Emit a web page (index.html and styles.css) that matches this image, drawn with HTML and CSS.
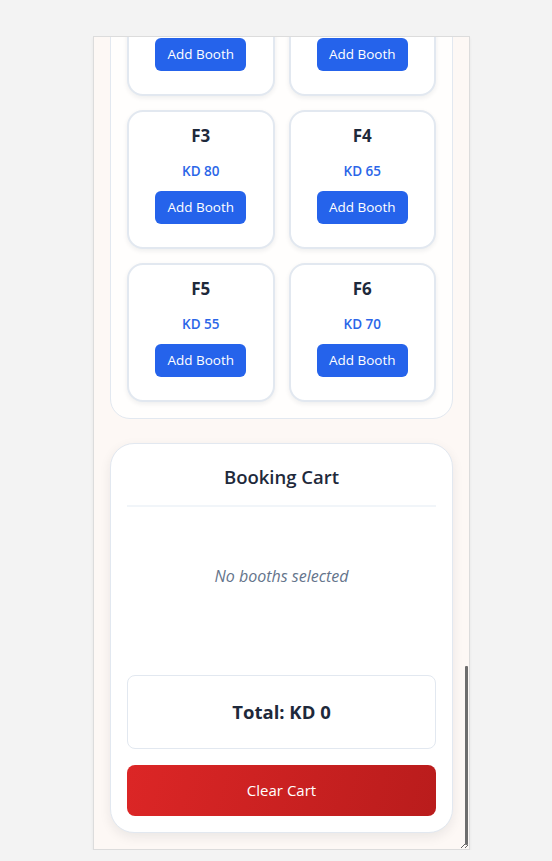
FILE: index.html
```html
<!DOCTYPE html>
<html lang="en">
<head>
  <meta charset="UTF-8">
  <meta name="viewport" content="width=device-width, initial-scale=1">
  <title>Booth Booking</title>
  <link rel="stylesheet" href="styles.css">
</head>
<body>

  <div class="frame-wrap">
    <div class="frame" id="frame">

      <!-- Header -->
      <header class="page-head">
        <h1>Exhibition Booth Booking</h1>
        <p>Pick your booths from the floor plan and add them to the cart.</p>
      </header>

      <!-- Booth list -->
      <section class="booths">
        <h2>Available Booths</h2>
        <div class="booth-grid" id="boothGrid"></div>
      </section>

      <!-- Cart -->
      <section class="cart">
        <h2 class="cart-title">Booking Cart</h2>
        <div class="cart-items" id="cartItems">
          <p class="empty">No booths selected</p>
        </div>
        <div class="cart-total">Total: KD <span id="total">0</span></div>
        <button class="clear-btn" onclick="clearCart()">Clear Cart</button>
      </section>

    </div>
    <div class="scroll-thumb" id="thumb"></div>
  </div>

  <script>
    const booths = [
      ["A1", 60], ["A2", 75], ["A3", 50], ["A4", 90], ["A5", 45], ["A6", 85],
      ["B1", 70], ["B2", 55], ["B3", 65], ["B4", 80], ["B5", 60], ["B6", 95],
      ["C1", 50], ["C2", 70], ["C3", 85], ["C4", 40], ["C5", 75], ["C6", 60],
      ["D1", 90], ["D2", 65], ["D3", 55], ["D4", 70], ["D5", 80], ["D6", 45],
      ["E1", 60], ["E2", 85], ["E3", 75], ["E4", 50], ["E5", 65], ["E6", 90],
      ["F1", 75], ["F2", 60], ["F3", 80], ["F4", 65], ["F5", 55], ["F6", 70]
    ];

    let cart = [];

    const grid = document.getElementById("boothGrid");
    booths.forEach(([name, price]) => {
      grid.innerHTML += `<div class="booth-card">
        <h3>${name}</h3>
        <p class="price">KD ${price}</p>
        <button class="add-btn" onclick="addBooth('${name}', ${price})">Add Booth</button>
      </div>`;
    });

    function renderCart() {
      const items = document.getElementById("cartItems");
      if (cart.length === 0) {
        items.innerHTML = '<p class="empty">No booths selected</p>';
      } else {
        items.innerHTML = cart.map(b => `<div class="cart-row"><span>${b.name}</span><span>KD ${b.price}</span></div>`).join("");
      }
      document.getElementById("total").textContent = cart.reduce((s, b) => s + b.price, 0);
    }

    function addBooth(name, price) {
      if (cart.find(b => b.name === name)) return;
      cart.push({ name, price });
      renderCart();
    }

    function clearCart() {
      cart = [];
      renderCart();
    }

    // thin overlay scrollbar
    const frame = document.getElementById("frame");
    const thumb = document.getElementById("thumb");

    function updateThumb() {
      const track = frame.offsetHeight - 7;
      const size = Math.max(30, track * frame.clientHeight / frame.scrollHeight);
      const max = frame.scrollHeight - frame.clientHeight;
      const pos = max > 0 ? frame.scrollTop / max * (track - size) : 0;
      thumb.style.height = size + "px";
      thumb.style.top = (2 + pos) + "px";
    }

    frame.addEventListener("scroll", updateThumb);
    frame.scrollTop = frame.scrollHeight;
    updateThumb();
  </script>

</body>
</html>
```

FILE: styles.css
```css
body {
  font-family: 'Open Sans', sans-serif;
  background: #f3f3f3;
  margin: 0;
  color: #1e293b;
}

.frame-wrap {
  position: relative;
  width: 377px;
  margin: 36px 0 0 93px;
}

.frame {
  box-sizing: border-box;
  width: 377px;
  height: 814px;
  padding: 16px;
  background: #fdf8f5;
  border: 1px solid #dcdcdc;
  box-shadow: 0 2px 3px rgba(0, 0, 0, 0.06);
  overflow: auto;
  resize: both;
}

.scroll-thumb {
  position: absolute;
  right: 2px;
  width: 3px;
  background: #6e6e6e;
  border-radius: 1px;
}

.page-head {
  text-align: center;
  padding: 24px 0 300px;
}

.page-head h1 {
  margin: 0 0 8px;
  font-size: 22px;
}

.page-head p {
  margin: 0;
  color: #64748b;
  font-size: 14px;
}

.booths {
  background: #fffefd;
  border: 1px solid #e2e8f0;
  border-radius: 20px;
  padding: 16px;
}

.booths h2 {
  margin: 0 0 16px;
  font-size: 20px;
  text-align: center;
}

.booth-grid {
  display: grid;
  grid-template-columns: 1fr 1fr;
  gap: 14px;
}

.booth-card {
  background: white;
  border: 2px solid #e2e8f0;
  border-radius: 16px;
  box-shadow: 0 2px 5px rgba(15, 23, 42, 0.07);
  padding: 10px 12px 23px;
  text-align: center;
}

.booth-card h3 {
  margin: 0 0 12px;
  font-size: 17px;
  line-height: 27px;
  font-weight: 700;
  color: #1e293b;
}

.price {
  margin: 0 0 9px;
  font-size: 13.5px;
  line-height: 21px;
  font-weight: 600;
  color: #2b66e8;
}

.add-btn {
  font-family: inherit;
  font-size: 13.5px;
  line-height: 21px;
  padding: 6px 12px;
  border: none;
  border-radius: 6px;
  background: #2563eb;
  color: white;
  cursor: pointer;
}

.cart {
  margin-top: 24px;
  background: white;
  border: 1px solid #e2e8f0;
  border-radius: 24px;
  padding: 17px 16px 16px;
  box-shadow: 0 4px 12px rgba(15, 23, 42, 0.08);
}

.cart-title {
  margin: 0;
  padding-bottom: 12px;
  border-bottom: 2px solid #f1f5f9;
  font-size: 18.5px;
  line-height: 32px;
  font-weight: 600;
  text-align: center;
}

.cart-items {
  min-height: 120px;
  margin: 17px 0 31px;
}

.empty {
  margin: 0;
  padding: 40px 0;
  font-size: 16px;
  line-height: 24px;
  font-style: italic;
  color: #64748b;
  text-align: center;
}

.cart-row {
  display: flex;
  justify-content: space-between;
  padding: 8px 0;
  border-bottom: 1px solid #f1f5f9;
}

.cart-total {
  border: 1px solid #e2e8f0;
  border-radius: 8px;
  padding: 20px 20px 21px;
  font-size: 18.5px;
  line-height: 31px;
  font-weight: 700;
  text-align: center;
}

.clear-btn {
  display: block;
  width: 100%;
  margin-top: 16px;
  padding: 14px;
  font-family: inherit;
  font-size: 15px;
  line-height: 23px;
  border: none;
  border-radius: 8px;
  background: linear-gradient(105deg, #dc2626, #b91c1c);
  color: white;
  cursor: pointer;
}
```
